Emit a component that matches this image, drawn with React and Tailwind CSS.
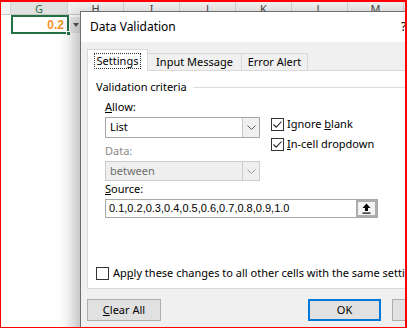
import React from 'react';

const cols = ['H', 'I', 'J', 'K', 'L', 'M'];

function Check({ checked }) {
  return (
    <div className="shrink-0 w-[13px] h-[13px] border border-[#333333] bg-white flex items-center justify-center">
      {checked && (
        <svg width="11" height="11" viewBox="0 0 11 11">
          <path d="M1.5 5.5 L4.2 8.2 L9.5 2.5" fill="none" stroke="#222222" strokeWidth="1.1" />
        </svg>
      )}
    </div>
  );
}

function Chevron({ color = '#606060' }) {
  return (
    <svg width="9" height="5" viewBox="0 0 9 5">
      <path d="M0.5 0.5 L4.5 4.5 L8.5 0.5" fill="none" stroke={color} strokeWidth="1" />
    </svg>
  );
}

export default function App() {
  return (
    <div className="relative w-[407px] h-[328px] overflow-hidden bg-white border-t-2 border-l border-b border-r-2 border-[#ff0000] font-['Noto_Sans',sans-serif] text-[11px] text-black">
      {/* sheet column headers */}
      <div className="flex h-[13px] bg-[#f3f3f3] border-b border-[#c8c8c8] text-[11px] leading-[13px] text-[#444444]">
        <div className="shrink-0 w-[10px] border-r border-[#d4d4d4]" />
        <div className="shrink-0 w-[57px] bg-[#e1e1e1] border-r border-[#d4d4d4] text-center text-[#217346]">G</div>
        {cols.map((c) => (
          <div key={c} className="w-[56px] shrink-0 border-r border-[#d4d4d4] text-center">{c}</div>
        ))}
      </div>

      {/* selected cell + list arrow */}
      <div className="flex items-start pl-[10px]">
        <div className="relative w-[58px] h-[19px] border-2 border-[#217346] flex items-center justify-end pr-[3px] text-[12px] font-bold text-[#f2962a] font-['Liberation_Sans',sans-serif]">
          0.2
          <div className="absolute right-[-4px] bottom-[-4px] w-[5px] h-[5px] bg-[#217346] border border-white" />
        </div>
        <div className="mt-[2px] ml-[1px] w-[11px] h-[16px] bg-[#ececec] flex items-center justify-center">
          <div className="w-0 h-0 border-l-[3.5px] border-r-[3.5px] border-t-[4px] border-l-transparent border-r-transparent border-t-[#555555]" />
        </div>
      </div>

      {/* Data Validation dialog */}
      <div className="absolute left-[79px] top-[9px] w-[420px] h-[330px] border border-[#6e6e6e] bg-[#f0f0f0] shadow-[-6px_4px_16px_rgba(0,0,0,0.28)] flex flex-col">
        <div className="h-[30px] bg-white flex items-center pl-[9px] text-[12px]">
          <span className="w-[311px] shrink-0">Data Validation</span>
          <span>?</span>
        </div>

        <div className="flex flex-col px-[6px] pt-[7px]">
          {/* tabs */}
          <div className="relative z-10 flex items-end h-[22px] -mb-px">
            <div className="shrink-0 w-[61px] h-[22px] bg-white border border-b-0 border-[#d9d9d9] flex items-center justify-center">
              <span className="px-[2px] leading-[14px] outline outline-1 outline-dotted outline-[#333333]">Settings</span>
            </div>
            <div className="shrink-0 w-[94px] h-[18px] border-t border-r border-[#d9d9d9] flex items-center justify-center">Input Message</div>
            <div className="shrink-0 w-[66px] h-[18px] border-t border-r border-[#d9d9d9] flex items-center justify-center">Error Alert</div>
          </div>

          {/* panel */}
          <div className="h-[219px] bg-white border border-[#d9d9d9] flex flex-col pl-[8px] pt-[8px] pb-[7px]">
            <div className="flex items-center h-[16px]">
              <span>Validation criteria</span>
              <div className="flex-1 ml-[6px] h-px bg-[#dcdcdc]" />
            </div>

            <div className="pl-[9px]">
              <div className="flex mt-[4px]">
                <div className="shrink-0 w-[155px] flex flex-col">
                  <div className="h-[16px] leading-[16px]"><span className="underline">A</span>llow:</div>
                  <div className="mt-[2px] h-[21px] border border-[#a8a8a8] bg-white flex">
                    <div className="flex-1 pl-[4px] flex items-center">List</div>
                    <div className="w-[17px] border-l border-[#c8c8c8] bg-[#f0f0f0] flex items-center justify-center"><Chevron /></div>
                  </div>
                  <div className="mt-[5px] h-[16px] leading-[16px] text-[#8a8a8a]">Data:</div>
                  <div className="mt-[2px] h-[20px] border border-[#cccccc] bg-[#efefef] flex text-[#6d6d6d]">
                    <div className="flex-1 pl-[4px] flex items-center">between</div>
                    <div className="w-[17px] border-l border-[#cccccc] flex items-center justify-center"><Chevron color="#9a9a9a" /></div>
                  </div>
                </div>
                <div className="ml-[11px] pt-[15px] flex flex-col">
                  <div className="h-[20px] flex items-center gap-[3px] whitespace-nowrap">
                    <Check checked />
                    <span>Ignore <span className="underline">b</span>lank</span>
                  </div>
                  <div className="h-[20px] flex items-center gap-[3px] whitespace-nowrap">
                    <Check checked />
                    <span><span className="underline">I</span>n-cell dropdown</span>
                  </div>
                </div>
              </div>

              <div className="h-[16px] leading-[16px]"><span className="underline">S</span>ource:</div>
              <div className="mt-[2px] w-[273px] h-[19px] border border-[#a8a8a8] bg-white flex">
                <div className="flex-1 pl-[3px] flex items-center font-['Liberation_Sans',sans-serif]">0.1,0.2,0.3,0.4,0.5,0.6,0.7,0.8,0.9,1.0</div>
                <div className="w-[21px] border-2 border-[#adadad] bg-[#f4f4f4] flex items-center justify-center">
                  <svg width="9" height="11" viewBox="0 0 9 11">
                    <path d="M4.5 0.5 L8.5 5 L6 5 L6 8 L3 8 L3 5 L0.5 5 Z" fill="#000000" />
                    <rect x="0.5" y="9.5" width="8" height="1.2" fill="#000000" />
                  </svg>
                </div>
              </div>
            </div>

            <div className="mt-auto h-[16px] flex items-center gap-[4px] whitespace-nowrap">
              <Check />
              <span>Ap<span className="underline">p</span>ly these changes to all other cells with the same settings</span>
            </div>
          </div>

          {/* buttons */}
          <div className="flex mt-[10px]">
            <div className="shrink-0 w-[74px] h-[22px] bg-[#e1e1e1] border border-[#adadad] flex items-center justify-center"><span><span className="underline">C</span>lear All</span></div>
            <div className="shrink-0 ml-[147px] w-[73px] h-[22px] bg-[#e1e1e1] border-2 border-[#0078d7] flex items-center justify-center">OK</div>
            <div className="shrink-0 ml-[11px] w-[73px] h-[22px] bg-[#e1e1e1] border border-[#adadad] flex items-center justify-center">Cancel</div>
          </div>
        </div>
      </div>
    </div>
  );
}
